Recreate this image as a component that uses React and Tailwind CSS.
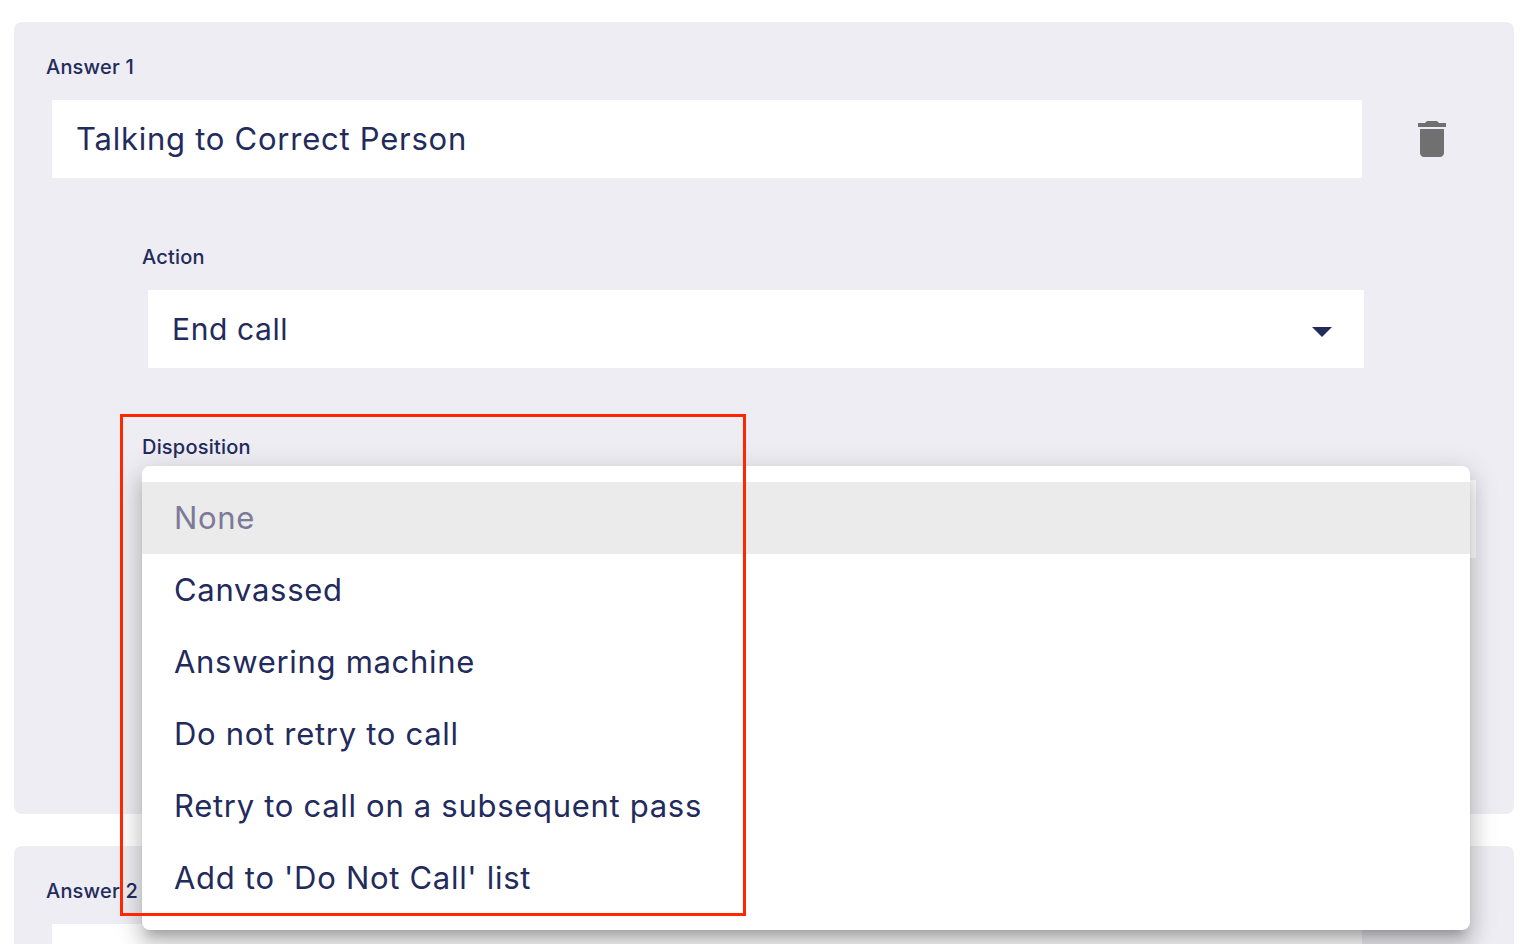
import React from 'react';

const fontStack = 'font-["Inter","Noto_Sans",sans-serif]';

const options = [
    'Canvassed',
    'Answering machine',
    'Do not retry to call',
    'Retry to call on a subsequent pass',
    "Add to 'Do Not Call' list",
];

const FieldLabel = ({ children }) => (
    <div className="h-[26px] text-[20px] leading-[26px] font-medium tracking-[0.2px] text-[#232a5c]">{children}</div>
);

const TextBox = ({ className, children }) => (
    <div className={`mt-5 ml-[6px] flex h-[78px] items-center bg-white pl-6 text-[#232a5c] ${className}`}>{children}</div>
);

const AnswerHead = ({ label, value }) => (
    <>
        <FieldLabel>{label}</FieldLabel>
        <div className="flex items-end">
            <TextBox className="w-[1310px] text-[31px] tracking-[0.75px]">{value}</TextBox>
            {value && (
                <svg viewBox="0 0 24 24" className="mb-[15px] ml-[46px] h-12 w-12 fill-[#707070]">
                    <path d="M6 19c0 1.1.9 2 2 2h8c1.1 0 2-.9 2-2V7H6v12zM19 4h-3.5l-1-1h-5l-1 1H5v2h14V4z" />
                </svg>
            )}
        </div>
    </>
);

export default function App() {
    return (
        <div className={`relative h-[944px] overflow-hidden bg-white pt-[22px] pl-[14px] ${fontStack}`}>
            <div className="h-[792px] w-[1500px] rounded-lg bg-[#eeedf3] pt-8 pl-8">
                <AnswerHead label="Answer 1" value="Talking to Correct Person" />

                <div className="mt-[66px] ml-[96px]">
                    <FieldLabel>Action</FieldLabel>
                    <TextBox className="w-[1216px] justify-between pr-[18px] text-[30px] tracking-[0.6px]">
                        End call
                        <svg viewBox="0 0 24 24" className="mt-1 h-12 w-12 fill-[#232a5c]">
                            <path d="M7 10l5 5 5-5z" />
                        </svg>
                    </TextBox>
                </div>

                <div className="mt-[66px] ml-[96px]">
                    <FieldLabel>Disposition</FieldLabel>
                    <TextBox className="w-[1328px]" />
                </div>
            </div>

            <div className="mt-8 h-[300px] w-[1500px] rounded-lg bg-[#eeedf3] pt-8 pl-8">
                <AnswerHead label="Answer 2" />
            </div>

            {/* open dropdown */}
            <ul className="absolute top-[466px] left-[142px] w-[1328px] rounded-lg bg-white py-4 text-[31px] tracking-[0.7px] text-[#232a5c] shadow-[0_10px_10px_-6px_rgba(0,0,0,0.2),0_16px_20px_2px_rgba(0,0,0,0.14),0_6px_28px_4px_rgba(0,0,0,0.12)]">
                <li className="flex h-[72px] items-center bg-[#ebebeb] px-8 text-[#7b7a98]">None</li>
                {options.map((option) => (
                    <li key={option} className="flex h-[72px] items-center px-8">{option}</li>
                ))}
            </ul>

            {/* annotation box */}
            <div className="absolute top-[414px] left-[120px] h-[502px] w-[626px] border-[3px] border-[#ff2600]" />
        </div>
    );
}
